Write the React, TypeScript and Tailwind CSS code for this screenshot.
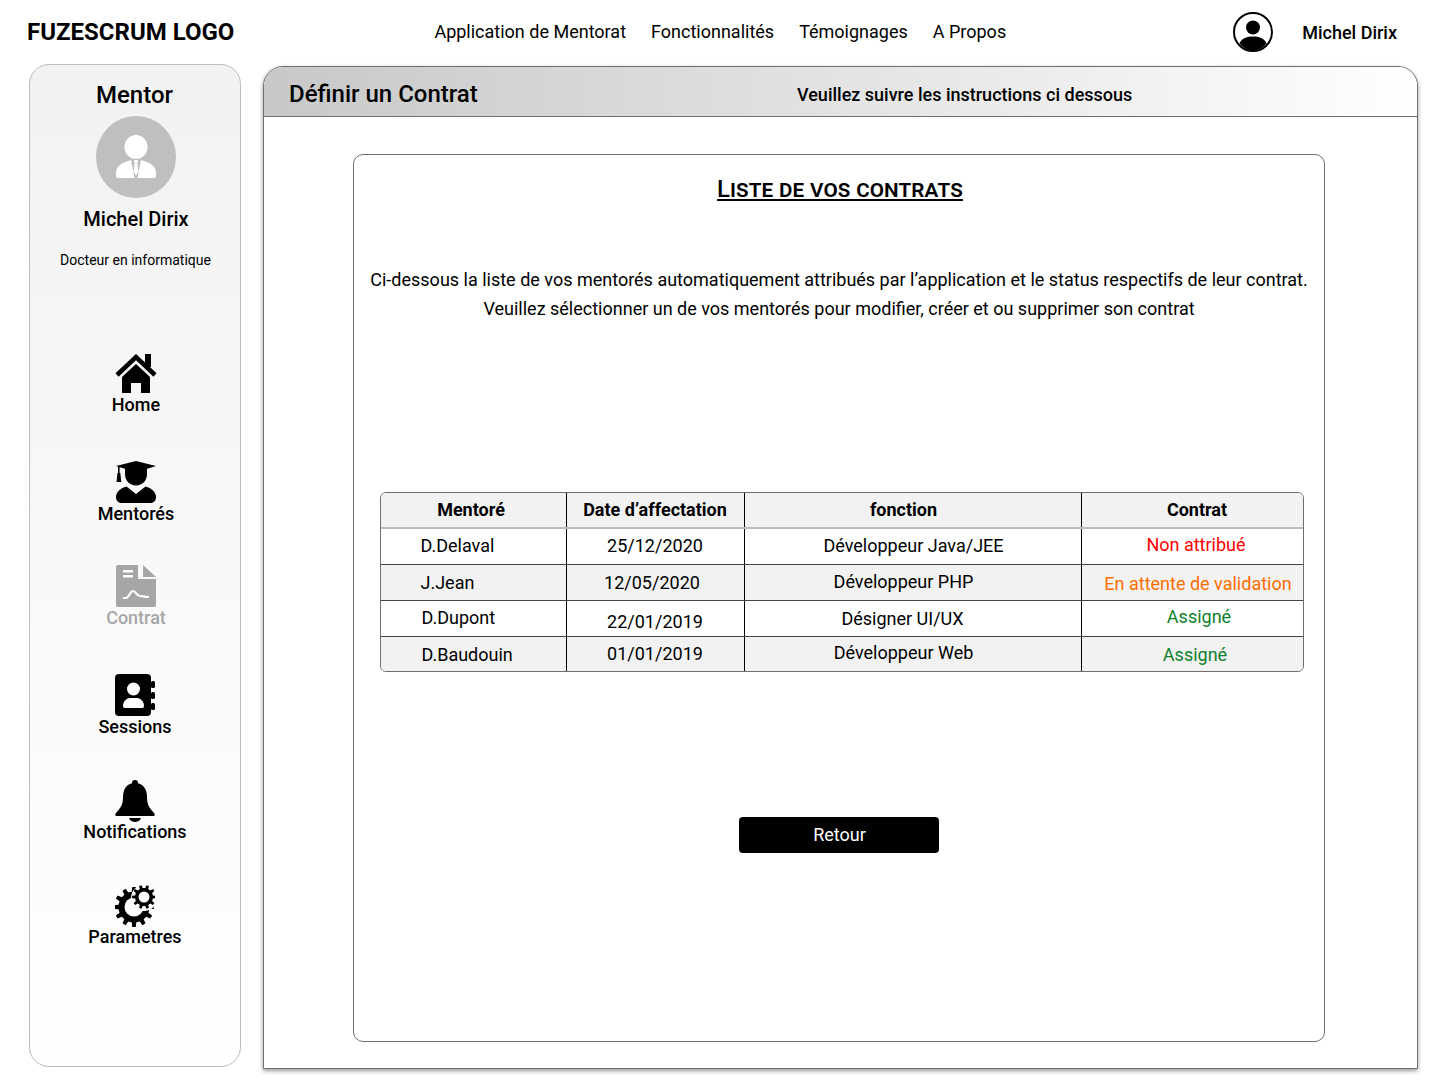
const rows = [
    { name: "D.Delaval", nameClass: "pl-[40px] pb-[2px]", date: "25/12/2020", dateClass: "pb-[2px]", job: "Développeur Java/JEE", jobClass: "pl-[2px] pb-[2px]", status: "Non attribué", statusClass: "text-[#ff0000] pl-[8px] pb-[4px]", rowClass: "bg-white h-[36px] border-b border-[#444444]" },
    { name: "J.Jean", nameClass: "pl-[40px]", date: "12/05/2020", dateClass: "pr-[6px] pb-[1px]", job: "Développeur PHP", jobClass: "pr-[18px] pb-[2px]", status: "En attente de validation", statusClass: "text-[#ff6d01] pl-[12px] pt-[2px]", rowClass: "bg-[#f2f2f2] h-[36px] border-b border-[#444444]" },
    { name: "D.Dupont", nameClass: "pl-[41px] pb-[2px]", date: "22/01/2019", dateClass: "pt-[6px]", job: "Désigner UI/UX", jobClass: "pr-[20px]", status: "Assigné", statusClass: "text-[#0f7f2b] pl-[14px] pb-[4px]", rowClass: "bg-white h-[36px] border-b border-[#444444]" },
    { name: "D.Baudouin", nameClass: "pl-[41px] pt-[1px]", date: "01/01/2019", dateClass: "pb-[2px]", job: "Développeur Web", jobClass: "pr-[18px] pb-[4px]", status: "Assigné", statusClass: "text-[#0f7f2b] pl-[6px] pt-[1px]", rowClass: "bg-[#f2f2f2] h-[34px]" },
];

function gearPath(cx: number, cy: number, outer: number, inner: number, teeth: number) {
    const points: string[] = [];
    const step = (Math.PI * 2) / teeth;
    for (let i = 0; i < teeth; i++) {
        const a = i * step;
        const corners: [number, number][] = [
            [inner, a - step * 0.5],
            [inner, a - step * 0.28],
            [outer, a - step * 0.17],
            [outer, a + step * 0.17],
            [inner, a + step * 0.28],
        ];
        corners.forEach(([r, t]) => {
            points.push(`${(cx + r * Math.cos(t)).toFixed(2)} ${(cy + r * Math.sin(t)).toFixed(2)}`);
        });
    }
    return `M${points.join("L")}Z`;
}

function UserCircle() {
    return (
        <svg viewBox="0 0 40 40" className="w-[40px] h-[40px]">
            <circle cx="20" cy="20" r="19" fill="white" stroke="black" strokeWidth="2" />
            <circle cx="20" cy="15.5" r="7" fill="black" />
            <path d="M6.5 31.5C9 26 14 24.5 20 24.5s11 1.5 13.5 7C30 36 25 38.5 20 38.5S10 36 6.5 31.5Z" fill="black" />
        </svg>
    );
}

function MentorAvatar() {
    return (
        <svg viewBox="0 0 80 82" className="w-[80px] h-[82px]">
            <ellipse cx="40" cy="41" rx="40" ry="41" fill="#bfbfbf" />
            <ellipse cx="40" cy="31" rx="11.500" ry="12" fill="white" />
            <path d="M22 62c-1.500 0-2-1-2-2v-3c0-5 3-8 7-10l8-3 3.500 18H22Z" fill="white" />
            <path d="M58 62c1.500 0 2-1 2-2v-3c0-5-3-8-7-10l-8-3-3.500 18H58Z" fill="white" />
            <path d="M38 44h4l-.7 3.500 1.200 8-2.500 4-2.500-4 1.200-8Z" fill="white" />
        </svg>
    );
}

function HomeIcon() {
    return (
        <svg viewBox="0 0 42 42" className="w-[42px] h-[42px]">
            <rect x="30" y="1" width="6" height="13" fill="black" />
            <path d="M2 22 21 4l19 18" fill="none" stroke="black" strokeWidth="4.500" />
            <path d="M21 11 35 24v16H26V30H16v10H7V24Z" fill="black" />
        </svg>
    );
}

function GraduateIcon() {
    return (
        <svg viewBox="0 0 40 42" className="w-[40px] h-[42px]">
            <path d="M20 0 40 5 29 8.500H11L0 5Z" fill="black" />
            <rect x="2" y="5" width="1.600" height="7" fill="black" />
            <path d="M1.500 12h2.800l1 9H.5Z" fill="black" />
            <path d="M9 8h22v5c0 6.500-4.500 11.500-11 11.500S9 19.500 9 13Z" fill="black" />
            <path d="M20 33 10.500 25.500C4.500 27 0 31 0 36c0 3.500 2 6 5.500 6h29c3.500 0 5.500-2.500 5.500-6 0-5-4.500-9-10.500-10.500Z" fill="black" />
        </svg>
    );
}

function ContractIcon() {
    return (
        <svg viewBox="0 0 40 42" className="w-[40px] h-[42px]">
            <path d="M2 0H22V14H40V40a2 2 0 0 1-2 2H2a2 2 0 0 1-2-2V2a2 2 0 0 1 2-2Z" fill="#a6a6a6" />
            <path d="M27 0 40 12H27Z" fill="#a6a6a6" />
            <rect x="7" y="5" width="10" height="2.500" fill="white" />
            <rect x="7" y="10" width="10" height="2.500" fill="white" />
            <path d="M7 33H10C13 33 14 26 17 26C20 26 20 31 24 31C27 31 28 32 33 32" fill="none" stroke="white" strokeWidth="2.200" />
        </svg>
    );
}

function ContactBookIcon() {
    return (
        <svg viewBox="0 0 40 42" className="w-[40px] h-[42px]">
            <rect x="0" y="0" width="36" height="42" rx="4" fill="black" />
            <rect x="36" y="7" width="4" height="7" rx="1.500" fill="black" />
            <rect x="36" y="18" width="4" height="7" rx="1.500" fill="black" />
            <rect x="36" y="29" width="4" height="7" rx="1.500" fill="black" />
            <circle cx="18.500" cy="15" r="6.500" fill="white" />
            <path d="M8 32c0-5 4-8 7-8h7c3 0 7 3 7 8 0 1.500-1 2-2 2H10c-1 0-2-.5-2-2Z" fill="white" />
        </svg>
    );
}

function BellIcon() {
    return (
        <svg viewBox="0 0 40 42" className="w-[40px] h-[42px]">
            <circle cx="20" cy="3" r="3" fill="black" />
            <path d="M20 3C28 3 32 9 32 17C32 26 35 28 39 33Q41 36 38 36H2Q-1 36 1 33C5 28 8 26 8 17C8 9 12 3 20 3Z" fill="black" />
            <path d="M14 38H26C25 41 22 42 20 42C18 42 15 41 14 38Z" fill="black" />
        </svg>
    );
}

function GearsIcon() {
    return (
        <svg viewBox="0 0 40 42" className="w-[40px] h-[42px]">
            <path d={gearPath(19, 22, 20, 15.500, 12)} fill="black" />
            <circle cx="19" cy="22" r="9.500" fill="white" />
            <circle cx="29" cy="13" r="13" fill="white" />
            <path d={gearPath(29, 12, 12, 9, 10)} fill="black" />
            <circle cx="29" cy="12" r="5.500" fill="white" />
        </svg>
    );
}

function SideItem({ icon, label, className, labelClass, muted }: { icon: React.ReactNode; label: string; className: string; labelClass?: string; muted?: boolean }) {
    return (
        <div className={`flex flex-col items-center ${className}`}>
            <div className="h-[42px] flex items-center justify-center">{icon}</div>
            <span className={`text-[18px] leading-[21px] font-medium ${labelClass ?? ""} ${muted ? "text-[#a6a6a6]" : "text-black"}`}>{label}</span>
        </div>
    );
}

export default function App() {
    return (
        <div className="w-[1440px] h-[1085px] bg-white overflow-hidden font-['Roboto',sans-serif] text-black">
            {/* Top bar */}
            <header className="h-[64px] flex items-center pl-[27px] pr-[43px]">
                <span className="text-[24px] leading-[30px] font-bold pb-[1px]">FUZESCRUM LOGO</span>
                <nav className="ml-[200px] flex items-center gap-[25px] text-[18px] pb-[1px]">
                    <span>Application de Mentorat</span>
                    <span>Fonctionnalités</span>
                    <span>Témoignages</span>
                    <span>A Propos</span>
                </nav>
                <div className="ml-auto flex items-center gap-[29px]">
                    <UserCircle />
                    <span className="text-[18px] font-medium">Michel Dirix</span>
                </div>
            </header>

            <div className="flex items-start pl-[29px] gap-[22px]">
                {/* Sidebar */}
                <aside className="w-[212px] h-[1003px] shrink-0 rounded-[20px] border border-[#bdbdbd] bg-gradient-to-b from-[#f2f2f2] to-white flex flex-col items-center pt-[16px]">
                    <h2 className="text-[24px] leading-[28px] font-medium pr-[1px]">Mentor</h2>
                    <div className="mt-[7px] pl-[2px]">
                        <MentorAvatar />
                    </div>
                    <p className="mt-[9px] text-[20px] leading-[24px] font-medium pl-[2px]">Michel Dirix</p>
                    <p className="mt-[21px] text-[14px] leading-[16px] pl-[1px]">Docteur en informatique</p>

                    <SideItem icon={<HomeIcon />} label="Home" className="mt-[85px] pl-[2px]" labelClass="-mt-px mb-px" />
                    <SideItem icon={<GraduateIcon />} label="Mentorés" className="mt-[45px] pl-[2px]" />
                    <SideItem icon={<ContractIcon />} label="Contrat" className="mt-[41px] pl-[2px]" muted />
                    <SideItem icon={<ContactBookIcon />} label="Sessions" className="mt-[46px]" />
                    <SideItem icon={<BellIcon />} label="Notifications" className="mt-[43px]" labelClass="-mt-px mb-px" />
                    <SideItem icon={<GearsIcon />} label="Parametres" className="mt-[42px]" labelClass="-mt-px mb-px" />
                </aside>

                {/* Main panel */}
                <main className="w-[1155px] h-[1003px] mt-[2px] shrink-0 rounded-t-[20px] border border-[#6f6f6f] bg-white shadow-[0_2px_4px_rgba(0,0,0,0.4)] flex flex-col">
                    <div className="h-[50px] shrink-0 rounded-t-[19px] border-b border-[#6f6f6f] bg-gradient-to-r from-[#c8c8c8] to-white flex items-center pl-[25px]">
                        <h1 className="text-[24px] leading-[30px] font-medium w-[508px] shrink-0 pt-[5px] h-[35px]">Définir un Contrat</h1>
                        <p className="text-[18px] font-medium pt-[5px]">Veuillez suivre les instructions ci dessous</p>
                    </div>

                    <section className="ml-[89px] mt-[37px] w-[972px] h-[888px] rounded-[10px] border border-[#6f6f6f] flex flex-col items-center">
                        <h3 className="mt-[20px] text-[24px] leading-[29px] font-medium underline [font-variant:small-caps] pl-[2px]">Liste de vos contrats</h3>
                        <div className="mt-[61px] text-[18px] leading-[29px] text-center">
                            <p>Ci-dessous la liste de vos mentorés automatiquement attribués par l’application et le status respectifs de leur contrat.</p>
                            <p>Veuillez sélectionner un de vos mentorés pour modifier, créer et ou supprimer son contrat</p>
                        </div>

                        <div className="mt-[169px] w-[924px] ml-[5px] rounded-[6px] border border-[#6f6f6f] overflow-hidden text-[18px]">
                            <div className="grid grid-cols-[186px_178px_337px_1fr] h-[36px] bg-[#f2f2f2] border-b-2 border-[#bdbdbd] font-bold leading-[34px] text-center">
                                <div className="border-r border-black pr-[4px]">Mentoré</div>
                                <div className="border-r border-black">Date d’affectation</div>
                                <div className="border-r border-black pr-[18px]">fonction</div>
                                <div className="pl-[10px]">Contrat</div>
                            </div>
                            {rows.map((row) => (
                                <div key={row.name} className={`grid grid-cols-[186px_178px_337px_1fr] ${row.rowClass}`}>
                                    <div className={`border-r border-black flex items-center ${row.nameClass}`}>{row.name}</div>
                                    <div className={`border-r border-black flex items-center justify-center ${row.dateClass}`}>{row.date}</div>
                                    <div className={`border-r border-black flex items-center justify-center ${row.jobClass}`}>{row.job}</div>
                                    <div className={`flex items-center justify-center ${row.statusClass}`}>{row.status}</div>
                                </div>
                            ))}
                        </div>

                        <button className="mt-[145px] w-[200px] h-[36px] rounded-[4px] bg-black text-white text-[18px] mr-[1px] pl-[2px] pb-[2px]">Retour</button>
                    </section>
                </main>
            </div>
        </div>
    );
}
